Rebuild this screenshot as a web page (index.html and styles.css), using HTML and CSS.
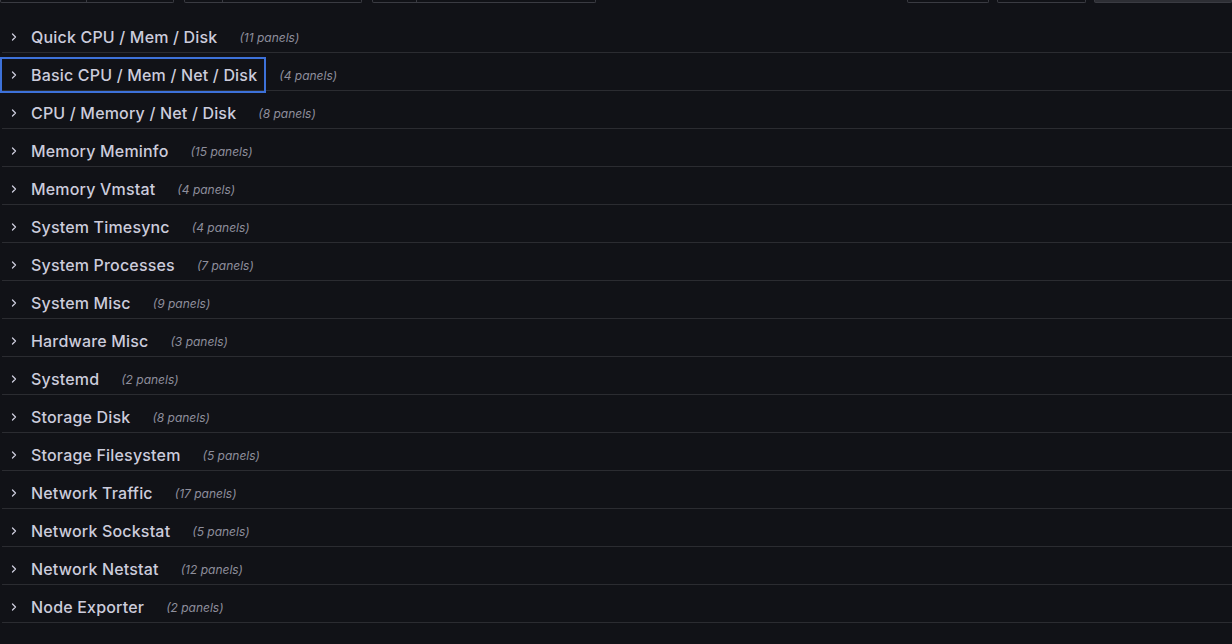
FILE: index.html
```html
<!DOCTYPE html>
<html>
<head>
<meta charset="utf-8">
<link rel="stylesheet" href="styles.css">
</head>
<body>
<div class="toolbar">
  <div class="tb-left">
    <div class="picker"><span class="pk-label w1"></span><span class="pk-val w2"></span></div>
    <div class="picker"><span class="pk-label w3"></span><span class="pk-val w4"></span></div>
    <div class="picker"><span class="pk-label w5"></span><span class="pk-val w6"></span></div>
  </div>
  <div class="tb-right">
    <div class="btn b1"></div>
    <div class="btn b2"></div>
    <div class="btn b3 filled"></div>
  </div>
</div>
<div class="rows">
  <div class="row"><button class="row-btn"><span class="chev"><svg viewBox="0 0 16 16" width="16" height="16"><path d="M6.5 5 L9.5 8 L6.5 11" fill="none" stroke="currentColor" stroke-width="1.3" stroke-linecap="round" stroke-linejoin="round"/></svg></span><span class="title">Quick CPU / Mem / Disk</span></button><span class="count">(11 panels)</span></div>
  <div class="row"><button class="row-btn focused"><span class="chev"><svg viewBox="0 0 16 16" width="16" height="16"><path d="M6.5 5 L9.5 8 L6.5 11" fill="none" stroke="currentColor" stroke-width="1.3" stroke-linecap="round" stroke-linejoin="round"/></svg></span><span class="title">Basic CPU / Mem / Net / Disk</span></button><span class="count">(4 panels)</span></div>
  <div class="row"><button class="row-btn"><span class="chev"><svg viewBox="0 0 16 16" width="16" height="16"><path d="M6.5 5 L9.5 8 L6.5 11" fill="none" stroke="currentColor" stroke-width="1.3" stroke-linecap="round" stroke-linejoin="round"/></svg></span><span class="title">CPU / Memory / Net / Disk</span></button><span class="count">(8 panels)</span></div>
  <div class="row"><button class="row-btn"><span class="chev"><svg viewBox="0 0 16 16" width="16" height="16"><path d="M6.5 5 L9.5 8 L6.5 11" fill="none" stroke="currentColor" stroke-width="1.3" stroke-linecap="round" stroke-linejoin="round"/></svg></span><span class="title">Memory Meminfo</span></button><span class="count">(15 panels)</span></div>
  <div class="row"><button class="row-btn"><span class="chev"><svg viewBox="0 0 16 16" width="16" height="16"><path d="M6.5 5 L9.5 8 L6.5 11" fill="none" stroke="currentColor" stroke-width="1.3" stroke-linecap="round" stroke-linejoin="round"/></svg></span><span class="title">Memory Vmstat</span></button><span class="count">(4 panels)</span></div>
  <div class="row"><button class="row-btn"><span class="chev"><svg viewBox="0 0 16 16" width="16" height="16"><path d="M6.5 5 L9.5 8 L6.5 11" fill="none" stroke="currentColor" stroke-width="1.3" stroke-linecap="round" stroke-linejoin="round"/></svg></span><span class="title">System Timesync</span></button><span class="count">(4 panels)</span></div>
  <div class="row"><button class="row-btn"><span class="chev"><svg viewBox="0 0 16 16" width="16" height="16"><path d="M6.5 5 L9.5 8 L6.5 11" fill="none" stroke="currentColor" stroke-width="1.3" stroke-linecap="round" stroke-linejoin="round"/></svg></span><span class="title">System Processes</span></button><span class="count">(7 panels)</span></div>
  <div class="row"><button class="row-btn"><span class="chev"><svg viewBox="0 0 16 16" width="16" height="16"><path d="M6.5 5 L9.5 8 L6.5 11" fill="none" stroke="currentColor" stroke-width="1.3" stroke-linecap="round" stroke-linejoin="round"/></svg></span><span class="title">System Misc</span></button><span class="count">(9 panels)</span></div>
  <div class="row"><button class="row-btn"><span class="chev"><svg viewBox="0 0 16 16" width="16" height="16"><path d="M6.5 5 L9.5 8 L6.5 11" fill="none" stroke="currentColor" stroke-width="1.3" stroke-linecap="round" stroke-linejoin="round"/></svg></span><span class="title">Hardware Misc</span></button><span class="count">(3 panels)</span></div>
  <div class="row"><button class="row-btn"><span class="chev"><svg viewBox="0 0 16 16" width="16" height="16"><path d="M6.5 5 L9.5 8 L6.5 11" fill="none" stroke="currentColor" stroke-width="1.3" stroke-linecap="round" stroke-linejoin="round"/></svg></span><span class="title">Systemd</span></button><span class="count">(2 panels)</span></div>
  <div class="row"><button class="row-btn"><span class="chev"><svg viewBox="0 0 16 16" width="16" height="16"><path d="M6.5 5 L9.5 8 L6.5 11" fill="none" stroke="currentColor" stroke-width="1.3" stroke-linecap="round" stroke-linejoin="round"/></svg></span><span class="title">Storage Disk</span></button><span class="count">(8 panels)</span></div>
  <div class="row"><button class="row-btn"><span class="chev"><svg viewBox="0 0 16 16" width="16" height="16"><path d="M6.5 5 L9.5 8 L6.5 11" fill="none" stroke="currentColor" stroke-width="1.3" stroke-linecap="round" stroke-linejoin="round"/></svg></span><span class="title">Storage Filesystem</span></button><span class="count">(5 panels)</span></div>
  <div class="row"><button class="row-btn"><span class="chev"><svg viewBox="0 0 16 16" width="16" height="16"><path d="M6.5 5 L9.5 8 L6.5 11" fill="none" stroke="currentColor" stroke-width="1.3" stroke-linecap="round" stroke-linejoin="round"/></svg></span><span class="title">Network Traffic</span></button><span class="count">(17 panels)</span></div>
  <div class="row"><button class="row-btn"><span class="chev"><svg viewBox="0 0 16 16" width="16" height="16"><path d="M6.5 5 L9.5 8 L6.5 11" fill="none" stroke="currentColor" stroke-width="1.3" stroke-linecap="round" stroke-linejoin="round"/></svg></span><span class="title">Network Sockstat</span></button><span class="count">(5 panels)</span></div>
  <div class="row"><button class="row-btn"><span class="chev"><svg viewBox="0 0 16 16" width="16" height="16"><path d="M6.5 5 L9.5 8 L6.5 11" fill="none" stroke="currentColor" stroke-width="1.3" stroke-linecap="round" stroke-linejoin="round"/></svg></span><span class="title">Network Netstat</span></button><span class="count">(12 panels)</span></div>
  <div class="row"><button class="row-btn"><span class="chev"><svg viewBox="0 0 16 16" width="16" height="16"><path d="M6.5 5 L9.5 8 L6.5 11" fill="none" stroke="currentColor" stroke-width="1.3" stroke-linecap="round" stroke-linejoin="round"/></svg></span><span class="title">Node Exporter</span></button><span class="count">(2 panels)</span></div>
</div>
</body>
</html>
```

FILE: styles.css
```css
* { box-sizing: border-box; }
html, body {
  margin: 0;
  padding: 0;
  background: #111217;
  height: 100%;
  overflow: hidden;
}
body {
  font-family: Inter, "Noto Sans", sans-serif;
  color: #ccccdc;
}
.toolbar {
  height: 15px;
  display: flex;
  justify-content: space-between;
  align-items: flex-start;
}
.tb-left, .tb-right {
  display: flex;
  height: 3px;
  overflow: hidden;
}
.tb-left { gap: 10px; }
.tb-right { gap: 8px; }
.picker {
  display: flex;
  height: 3px;
  border: 1px solid #3a3b42;
  border-top: none;
  border-radius: 0 0 2px 2px;
}
.pk-label { border-right: 1px solid #3a3b42; display: block; }
.pk-val { display: block; }
.w1 { width: 86px; }
.w2 { width: 86px; }
.w3 { width: 38px; }
.w4 { width: 138px; }
.w5 { width: 44px; }
.w6 { width: 178px; }
.btn {
  height: 3px;
  border: 1px solid #3a3b42;
  border-top: none;
  border-radius: 0 0 2px 2px;
}
.b1 { width: 82px; }
.b2 { width: 89px; }
.b3 { width: 138px; }
.filled { background: #2d2e34; }

.rows {
  padding-left: 2px;
}
.row {
  height: 38px;
  border-bottom: 1px solid #2b2c31;
  display: flex;
  align-items: flex-start;
}
.row-btn {
  margin-top: 6px;
  height: 32px;
  display: flex;
  align-items: center;
  background: none;
  border: none;
  padding: 0 7px 0 4px;
  color: #ccccdc;
  font-family: inherit;
  font-size: 16px;
  font-weight: 500;
  cursor: pointer;
}
.row-btn.focused {
  outline: 2px solid #3d71d9;
  outline-offset: 0;
}
.chev {
  display: flex;
  width: 16px;
  height: 16px;
  margin-right: 9px;
  color: #ccccdc;
}
.chev svg { display: block; }
.title {
  white-space: nowrap;
  letter-spacing: 0.18px;
}
.count {
  margin-top: 6px;
  height: 32px;
  display: flex;
  align-items: center;
  margin-left: 15px;
  font-size: 12px;
  font-style: italic;
  color: #8e8e9c;
  white-space: nowrap;
}
```
